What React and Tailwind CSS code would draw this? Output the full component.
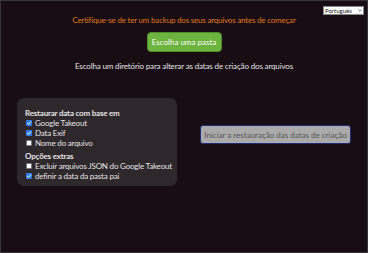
import React from 'react'

/* small custom checkbox, drawn to match the scaled-down native one */
function Check({ checked }) {
  return checked ? (
    <span className="w-[6px] h-[6px] bg-[#2f7fe6] rounded-[1px] flex items-center justify-center shrink-0">
      <svg viewBox="0 0 6 6" className="w-[6px] h-[6px]">
        <path d="M1.2 3.1 L2.5 4.4 L4.9 1.6" fill="none" stroke="white" strokeWidth="1" />
      </svg>
    </span>
  ) : (
    <span className="w-[6px] h-[6px] bg-white rounded-[1px] border border-[#777] shrink-0" />
  )
}

function Option({ checked, children }) {
  return (
    <div className="flex items-center gap-[3px] h-[10px] pl-[1px] whitespace-nowrap">
      <Check checked={checked} />
      <span>{children}</span>
    </div>
  )
}

export default function App() {
  return (
    <div
      className="w-[368px] h-[253px] bg-[#170d13] border border-[#3a3539] text-[#e6e3e6] text-[8px] leading-[10px] flex flex-col whitespace-nowrap"
      style={{ fontFamily: 'Lato, "Noto Sans", sans-serif' }}
    >
      <div className="flex justify-end pt-[5px] pr-[3px]">
        <div className="w-[41px] h-[9px] bg-white border border-[#888] text-[#222] text-[6px] leading-[7px] flex items-center justify-between px-[1px]">
          <span>Português</span>
          <svg viewBox="0 0 6 4" className="w-[4px] h-[3px]">
            <path d="M0.5 0.5 L3 3 L5.5 0.5" fill="none" stroke="#333" strokeWidth="1" />
          </svg>
        </div>
      </div>

      <div className="flex flex-col items-center">
        <p className="text-[#e0781e] tracking-[-0.2px]">Certifique-se de ter um backup dos seus arquivos antes de começar</p>
        <button className="mt-[7px] w-[75px] h-[20px] rounded-[4px] bg-[#6db33f] border border-[#4f8c2c] text-white text-[8px]">
          Escolha uma pasta
        </button>
        <p className="mt-[9px] tracking-[-0.15px]">Escolha um diretório para alterar as datas de criação dos arquivos</p>
      </div>

      <div className="flex items-start mt-[27px] pl-[16px]">
        <div className="w-[160px] h-[88px] bg-[#2e272c] rounded-[7px] pl-[8px] pr-[4px] pt-[10px] tracking-[-0.2px]">
          <div className="font-bold">Restaurar data com base em</div>
          <Option checked>Google Takeout</Option>
          <Option checked>Data Exif</Option>
          <Option>Nome do arquivo</Option>
          <div className="font-bold mt-[3px]">Opções extras</div>
          <Option>Excluir arquivos JSON do Google Takeout</Option>
          <Option checked>definir a data da pasta pai</Option>
        </div>
        <button className="ml-[23px] mt-[27px] w-[151px] h-[19px] rounded-[3px] bg-[#aaaaaa] border border-[#1f2a78] text-[#555] text-[8px]">
          Iniciar a restauração das datas de criação
        </button>
      </div>
    </div>
  )
}
